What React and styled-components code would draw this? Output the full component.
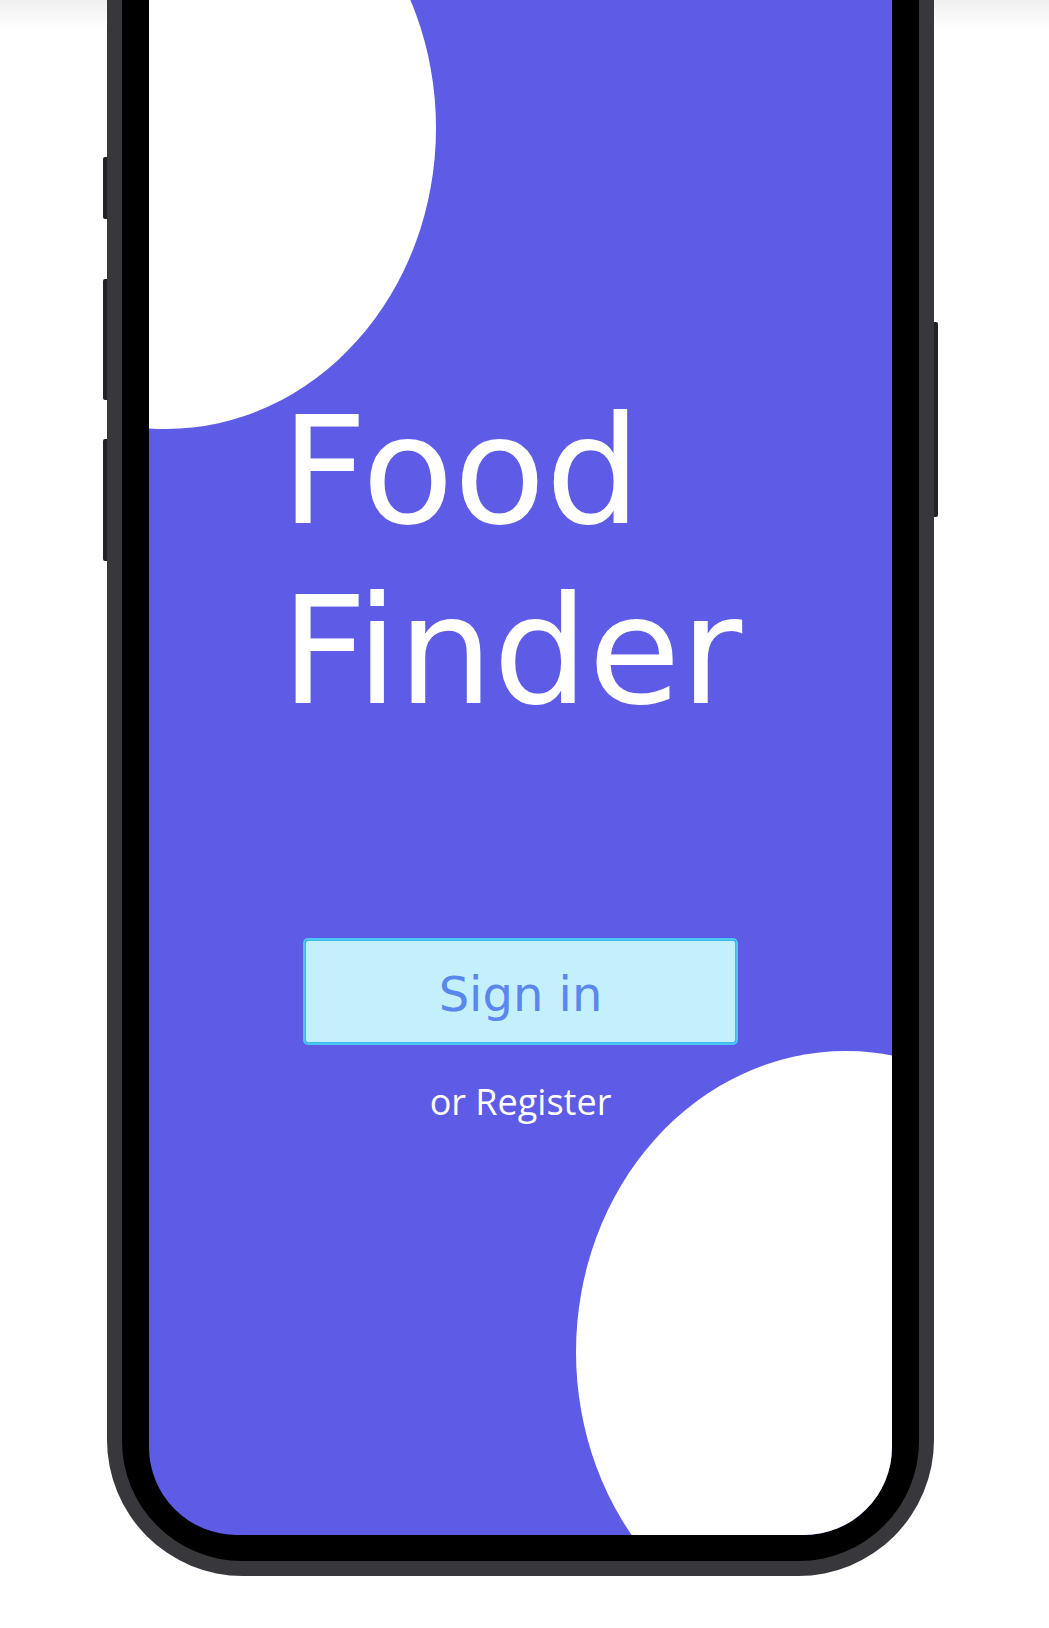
import React from "react";
import styled, { createGlobalStyle } from "styled-components";

const GlobalStyle = createGlobalStyle`
  html, body {
    margin: 0;
    padding: 0;
  }
  body {
    background: linear-gradient(to bottom, #f0f0f0 0, #ffffff 30px) no-repeat, #ffffff;
    overflow: hidden;
  }
`;

const Page = styled.div`
  width: 1049px;
  height: 1628px;
  padding-left: 107px;
  box-sizing: border-box;
  overflow: hidden;
`;

// the phone is taller than the window, its top runs off the page
const PhoneFrame = styled.div`
  position: relative;
  width: 827px;
  margin-top: -300px;
  padding: 15px;
  box-sizing: border-box;
  background: #38373c;
  border-radius: 136px;
`;

const SideButton = styled.span`
  position: absolute;
  top: ${(p) => p.$top}px;
  height: ${(p) => p.$height}px;
  width: 4px;
  background: #232326;
  ${(p) => (p.$right ? "right: -4px; border-radius: 0 2px 2px 0;" : "left: -4px; border-radius: 2px 0 0 2px;")}
`;

const Bezel = styled.div`
  padding: 26px 27px;
  background: #000;
  border-radius: 120px;
`;

const Screen = styled.div`
  position: relative;
  height: 1794px;
  padding-top: 640px;
  box-sizing: border-box;
  background: #5e5ce6;
  border-radius: 88px;
  overflow: hidden;
  display: flex;
  flex-direction: column;
`;

const Blob = styled.div`
  position: absolute;
  width: 540px;
  height: 602px;
  border-radius: 50%;
  background: #ffffff;
  ${(p) => (p.$corner === "top" ? "top: 86px; left: -253px;" : "bottom: -118px; right: -224px;")}
`;

const Title = styled.h1`
  position: relative;
  z-index: 1;
  margin: 0 0 0 132px;
  font-family: "DejaVu Sans", Verdana, sans-serif;
  font-weight: normal;
  font-size: 150px;
  line-height: 180px;
  color: #ffffff;
`;

const Actions = styled.div`
  position: relative;
  z-index: 1;
  display: flex;
  flex-direction: column;
  align-items: center;
  gap: 35px;
  margin-top: 199px;
`;

const SignInButton = styled.button`
  width: 431px;
  height: 103px;
  padding: 5px 0 0;
  box-sizing: border-box;
  background: #c4effd;
  border: 1px solid #3eb8e8;
  border-radius: 3px;
  outline: 2px solid #48c8f3;
  font-family: "DejaVu Sans", Verdana, sans-serif;
  font-size: 48px;
  color: #5a86ee;
  cursor: pointer;
`;

const RegisterLink = styled.a`
  font-family: "Open Sans", "Noto Sans", sans-serif;
  font-size: 36px;
  line-height: 48px;
  color: #ffffff;
  text-decoration: none;
  cursor: pointer;
`;

export default function App() {
  return (
    <>
      <GlobalStyle />
      <Page>
        <PhoneFrame>
          <SideButton $top={457} $height={62} />
          <SideButton $top={579} $height={121} />
          <SideButton $top={739} $height={122} />
          <SideButton $right $top={622} $height={195} />
          <Bezel>
            <Screen>
              <Blob $corner="top" />
              <Blob $corner="bottom" />
              <Title>Food Finder</Title>
              <Actions>
                <SignInButton>Sign in</SignInButton>
                <RegisterLink>or Register</RegisterLink>
              </Actions>
            </Screen>
          </Bezel>
        </PhoneFrame>
      </Page>
    </>
  );
}
